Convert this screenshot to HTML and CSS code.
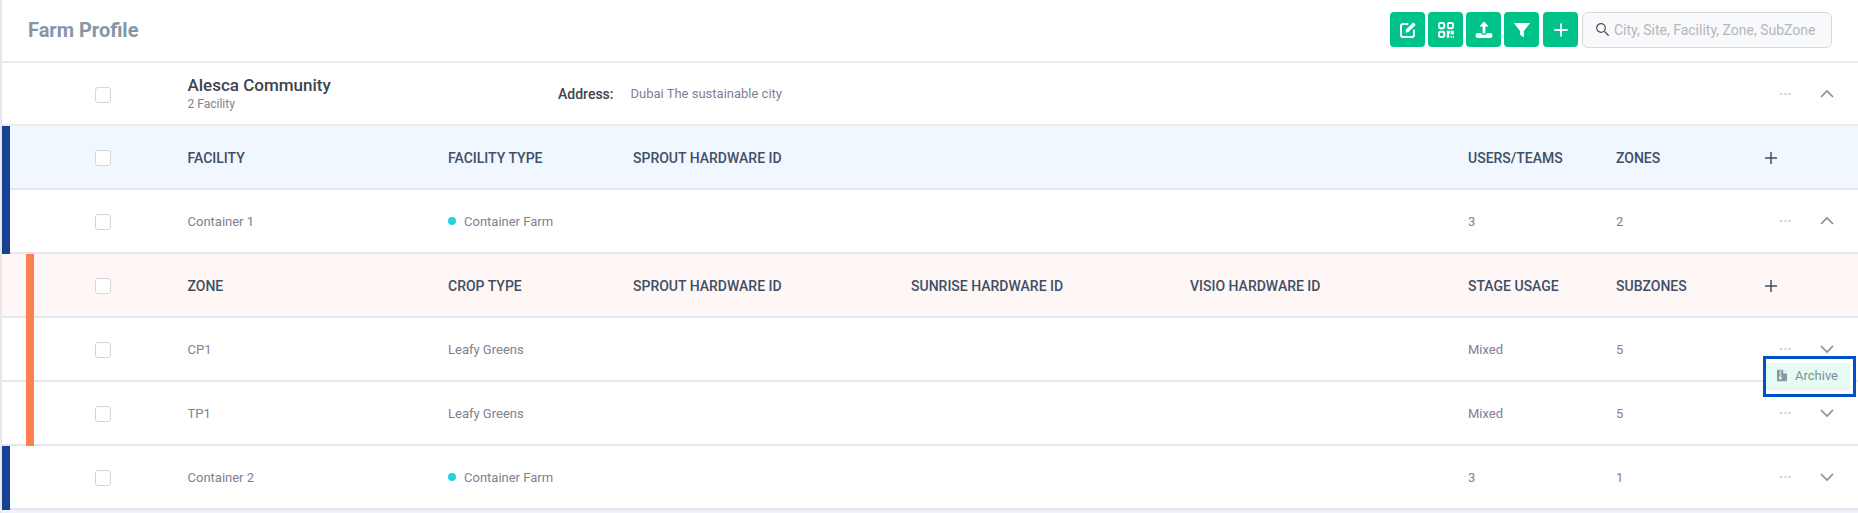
FILE: index.html
```html
<!DOCTYPE html>
<html lang="en">
<head>
<meta charset="utf-8">
<title>Farm Profile</title>
<link rel="stylesheet" href="styles.css">
</head>
<body>
<main class="page">
  <header class="topbar">
    <h1 class="title">Farm Profile</h1>
    <div class="tools">
      <button class="tool"><svg viewBox="0 0 20 20" class="ico"><path d="M9.5 4H5A2 2 0 0 0 3 6v9a2 2 0 0 0 2 2h9a2 2 0 0 0 2-2v-4.500" fill="none" stroke="#fff" stroke-width="2" stroke-linecap="round"/><path d="M7.400 12.800l.6-3.200 6.600-6.600a1 1 0 0 1 1.400 0l1.100 1.100a1 1 0 0 1 0 1.400l-6.600 6.600z" fill="#fff"/></svg></button>
      <button class="tool"><svg viewBox="0 0 20 20" class="ico"><g fill="none" stroke="#fff" stroke-width="1.900"><rect x="3" y="3" width="5.200" height="5.200" rx="1.200"/><rect x="11.800" y="3" width="5.200" height="5.200" rx="1.200"/><rect x="3" y="11.800" width="5.200" height="5.200" rx="1.200"/></g><path d="M10.800 10.800h3.400v2.400h-1v4.600h-2.400zM14.800 10.800h3v3.600h-3zM14.600 16h1.300v1.800h-1.300zM16.800 16h1.200v1.800h-1.200z" fill="#fff"/></svg></button>
      <button class="tool"><svg viewBox="0 0 20 20" class="ico"><path d="M10 1.400l4.600 5h-3.200v7.200H8.600V6.400H5.400z" fill="#fff"/><path d="M1.600 15.400c0-1.300 1-2.300 2.200-2.300h3c.5 1.200 1.700 1.900 3.200 1.900s2.700-.7 3.200-1.900h3c1.200 0 2.200 1 2.200 2.300v.5c0 1.200-1 2.100-2.200 2.100H3.800c-1.200 0-2.200-.9-2.200-2.100z" fill="#fff"/></svg></button>
      <button class="tool"><svg viewBox="0 0 20 20" class="ico"><path d="M1.800 3h16.400l-6.300 8v6.400l-3.800-2.600V11z" fill="#fff"/></svg></button>
      <button class="tool tool-add"><svg viewBox="0 0 20 20" class="ico"><path d="M10 3.400v13.200M3.400 10h13.200" stroke="#fff" stroke-width="1.900" fill="none"/></svg></button>
    </div>
    <label class="search">
      <svg viewBox="0 0 16 16" class="search-ico"><circle cx="6.400" cy="6.400" r="4.600" fill="none" stroke="#4a4f5c" stroke-width="1.300"/><path d="M10 10l4.600 4.600" stroke="#4a4f5c" stroke-width="1.500"/></svg>
      <input class="search-input" placeholder="City, Site, Facility, Zone, SubZone">
    </label>
  </header>

  <section class="row row-site">
    <div class="lead"><span class="check"></span></div>
    <div class="site-name"><strong>Alesca Community</strong><small>2 Facility</small></div>
    <div class="site-addr"><b>Address:</b><span>Dubai The sustainable city</span></div>
    <div class="actions"><span class="dots">···</span><svg viewBox="0 0 16 10" class="chev"><path d="M2 8l6-6 6 6"/></svg></div>
  </section>

  <section class="row row-head head-blue rail-blue">
    <div class="lead"><span class="check"></span></div>
    <div>FACILITY</div><div>FACILITY TYPE</div><div>SPROUT HARDWARE ID</div><div></div><div></div><div>USERS/TEAMS</div><div>ZONES</div>
    <div class="add"><svg viewBox="0 0 14 14" class="plus"><path d="M7 1v12M1 7h12"/></svg></div>
  </section>

  <section class="row rail-blue">
    <div class="lead"><span class="check"></span></div>
    <div>Container 1</div><div class="farm"><i class="dot"></i>Container Farm</div><div></div><div></div><div></div><div>3</div><div>2</div>
    <div class="actions"><span class="dots">···</span><svg viewBox="0 0 16 10" class="chev"><path d="M2 8l6-6 6 6"/></svg></div>
  </section>

  <section class="row row-head head-orange rail-orange">
    <div class="lead"><span class="check"></span></div>
    <div>ZONE</div><div>CROP TYPE</div><div>SPROUT HARDWARE ID</div><div>SUNRISE HARDWARE ID</div><div>VISIO HARDWARE ID</div><div>STAGE USAGE</div><div>SUBZONES</div>
    <div class="add"><svg viewBox="0 0 14 14" class="plus"><path d="M7 1v12M1 7h12"/></svg></div>
  </section>

  <section class="row rail-orange">
    <div class="lead"><span class="check"></span></div>
    <div>CP1</div><div>Leafy Greens</div><div></div><div></div><div></div><div>Mixed</div><div>5</div>
    <div class="actions"><span class="dots">···</span><svg viewBox="0 0 16 10" class="chev"><path d="M2 2l6 6 6-6"/></svg>
      <div class="menu"><div class="menu-item"><svg viewBox="0 0 12 14" class="zip"><path d="M1 0h6.500L12 4.500V13a1 1 0 0 1-1 1H1a1 1 0 0 1-1-1V1a1 1 0 0 1 1-1z" fill="#8a97a3"/><path d="M7.500 0v4.500H12z" fill="#e6fbf2"/><path d="M3.500 1h2v1.600h-2zM2.500 3.400h2V5h-2zM3.500 5.800h2v1.600h-2zM2.500 8.200h3v3.200h-3z" fill="#e6fbf2"/></svg>Archive</div></div>
    </div>
  </section>

  <section class="row rail-orange">
    <div class="lead"><span class="check"></span></div>
    <div>TP1</div><div>Leafy Greens</div><div></div><div></div><div></div><div>Mixed</div><div>5</div>
    <div class="actions"><span class="dots">···</span><svg viewBox="0 0 16 10" class="chev"><path d="M2 2l6 6 6-6"/></svg></div>
  </section>

  <section class="row rail-blue">
    <div class="lead"><span class="check"></span></div>
    <div>Container 2</div><div class="farm"><i class="dot"></i>Container Farm</div><div></div><div></div><div></div><div>3</div><div>1</div>
    <div class="actions"><span class="dots">···</span><svg viewBox="0 0 16 10" class="chev"><path d="M2 2l6 6 6-6"/></svg></div>
  </section>
  <div class="rest"></div>
</main>
</body>
</html>
```

FILE: styles.css
```css
* { box-sizing: border-box; }
html, body { margin: 0; height: 513px; overflow: hidden; background: #fff; }
body { font-family: Roboto, "Liberation Sans", sans-serif; font-size: 13px; color: #7f8094; }
.page { border-left: 2px solid #e8e8ec; height: 513px; }

.topbar { height: 63px; display: flex; align-items: center; padding: 0 26px 2px 26px; border-bottom: 2px solid #ececef; }
.title { margin: 0 auto 0 0; font-size: 20px; font-weight: 700; color: #8496a8; }
.tools { display: flex; gap: 3px; }
.tool { width: 35px; height: 35px; padding: 0; border: 0; border-radius: 4px; background: #00c389; display: flex; align-items: center; justify-content: center; }
.tool-add { margin-left: 1px; }
.ico { width: 20px; height: 20px; display: block; }
.search { margin-left: 4px; width: 250px; height: 36px; display: flex; align-items: center; gap: 4px; padding: 0 12px; background: #f8f9fb; border: 1px solid #d8d9dd; border-radius: 6px; }
.search-ico { width: 15px; height: 15px; flex: none; }
.search-input { flex: 1; min-width: 0; border: 0; padding: 0; background: none; outline: 0; font: 14px Roboto, sans-serif; }
.search-input::placeholder { color: #b4b6bd; opacity: 1; }

.row { height: 64px; display: grid; grid-template-columns: 185.5px 260.5px 185px 278px 279px 278px 148px 154px 1fr; align-items: center; border-bottom: 2px solid #e6e6ee; }
.lead { align-self: stretch; display: flex; align-items: center; padding-left: 93px; margin-bottom: -2px; }
.check { width: 16px; height: 16px; background: #fff; border: 1px solid #d6d6da; border-radius: 3px; }
.rail-blue .lead { background: linear-gradient(#164193, #164193) 0 0 / 8px 100% no-repeat; }
.rail-orange .lead { background: linear-gradient(#ff7f4d, #ff7f4d) 24px 0 / 8px 100% no-repeat; }

.row-head { font-weight: 500; color: #3f4f66; font-size: 14px; }
.row-head > div { padding-top: 1px; }
.row-head > .lead { padding-top: 0; }
.head-blue { background: #f1f7fe; }
.head-orange { background: #fef7f5; }
.farm { display: flex; align-items: center; gap: 8px; }
.dot { width: 8px; height: 8px; border-radius: 50%; background: #22d3e6; }

.row-site { height: 63px; grid-template-columns: 185.5px 370.5px 1fr 88px; border-bottom-color: #ececef; }
.site-name { display: flex; flex-direction: column; padding-bottom: 2px; }
.site-name strong { font-size: 17px; font-weight: 500; color: #3e4450; line-height: 22px; }
.site-name small { font-size: 12px; color: #7f8094; line-height: 16px; }
.site-addr { display: flex; align-items: center; gap: 17px; font-size: 13px; }
.site-addr b { font-size: 14px; font-weight: 500; color: #3e4450; }

.actions { position: relative; display: flex; align-items: center; justify-content: space-between; width: 56px; margin-left: 9px; }
.row .actions { grid-column: 9; }
.row-site .actions { grid-column: 4; }
.dots { font-size: 14px; color: #c9cfdb; font-weight: 700; line-height: 1; }
.chev { width: 16px; height: 10px; fill: none; stroke: #8a8a9a; stroke-width: 1.6; }
.add { grid-column: 9; }
.plus { display: block; width: 14px; height: 14px; fill: none; stroke: #3f4f66; stroke-width: 1.5; margin-left: -6px; }

.menu { position: absolute; left: -16px; top: 14px; width: 93px; height: 41px; padding: 4px 3px 6px 0; background: #fff; border: 3px solid #0052cc; z-index: 2; }
.menu-item { height: 25px; display: flex; align-items: center; gap: 8px; padding-left: 11px; background: #e6fbf2; color: #7d8ea0; font-size: 13px; box-shadow: 0 2px 0 #f0f0f0; }
.zip { width: 10px; height: 13px; flex: none; }
.rest { height: 3px; background: #f0f2fa; }
```
